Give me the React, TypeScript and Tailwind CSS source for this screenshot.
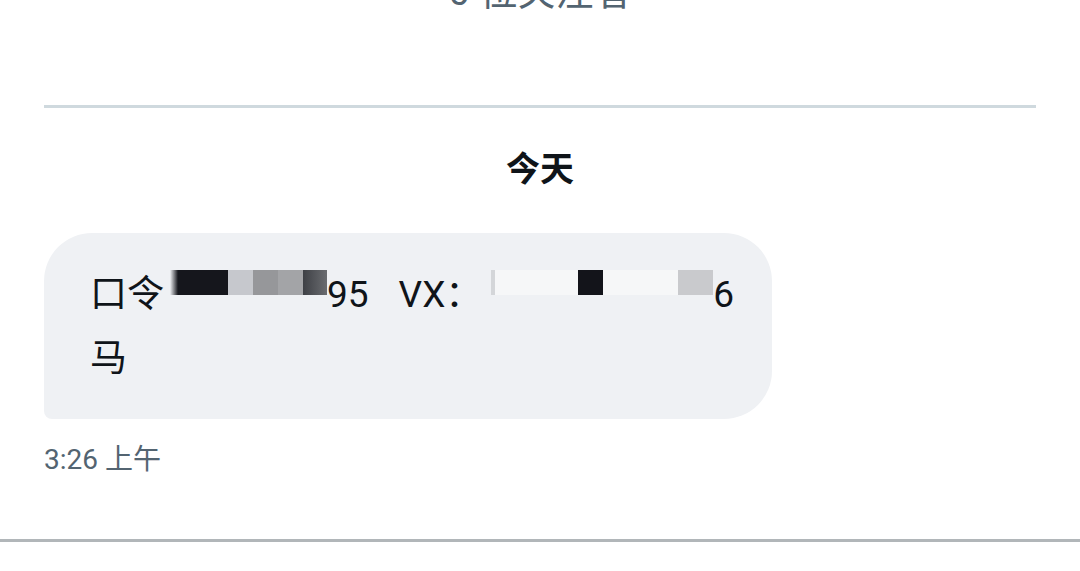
import React from 'react'

const font = { fontFamily: 'Roboto, "Noto Sans CJK SC", sans-serif' }

// pixelated blocks that hide the private parts of the message
function Mask({ blocks }: { blocks: [number, string][] }) {
  return (
    <span className="inline-flex h-[25px] align-[12px]">
      {blocks.map(([w, c], i) => (
        <span key={i} className="h-full" style={{ width: w, background: c }} />
      ))}
    </span>
  )
}

export default function App() {
  return (
    <div className="w-full h-[571px] bg-white overflow-hidden flex flex-col" style={font}>
      <div className="-mt-[27px] h-[38px] text-center text-[38px] leading-[38px] text-[#536471]">
        0 位关注者
      </div>

      <div className="mt-[94px] mx-[44px] h-[3px] bg-[#cfd9de]" />

      <div className="mt-[44px] text-center text-[34px] leading-[34px] font-bold text-[#0f1419]">
        今天
      </div>

      <div className="mt-[47px] ml-[44px] w-[728px] bg-[#eff1f4] rounded-[48px] rounded-bl-[8px] pl-[46px] pt-[30px] pb-[28px] text-[37px] leading-[64px] text-[#0f1419] whitespace-nowrap">
        <span>口令</span>
        <span className="ml-[6px]" />
        <Mask
          blocks={[
            [8, 'linear-gradient(to right, #eff1f4, #15161c)'],
            [50, '#15161c'],
            [25, '#c6c8cd'],
            [25, '#96979a'],
            [25, '#a3a4a7'],
            [24, 'linear-gradient(to right, #3e4045, #6a6c70)'],
          ]}
        />
        <span>95</span>
        <span className="ml-[30px]">VX：</span>
        <span className="ml-[9px]" />
        <Mask
          blocks={[
            [4, '#d4d6d9'],
            [83, '#f6f7f8'],
            [25, '#13141a'],
            [75, '#f6f7f8'],
            [35, '#c9cacd'],
          ]}
        />
        <span>6</span>
        <br />
        <span>马</span>
      </div>

      <div className="mt-[25px] ml-[44px] text-[28px] leading-[32px] text-[#536471]">3:26 上午</div>

      <div className="mt-[63px] h-[3px] bg-[#b1b6b9]" />
    </div>
  )
}
